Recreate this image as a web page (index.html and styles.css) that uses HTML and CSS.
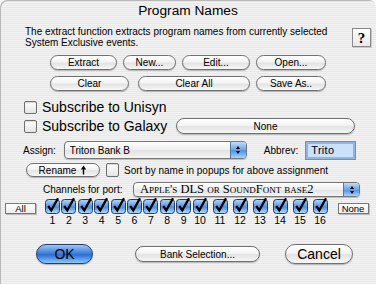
FILE: index.html
```html
<!DOCTYPE html>
<html><head><meta charset="utf-8"><link rel="stylesheet" href="styles.css"></head>
<body>
<svg class="defs" width="0" height="0"><defs>
<linearGradient id="blue" x1="0" y1="0" x2="0" y2="1"><stop offset="0" stop-color="#b8d6f7"/><stop offset="0.45" stop-color="#5f9de6"/><stop offset="0.55" stop-color="#4f8fe0"/><stop offset="1" stop-color="#bfe0fd"/></linearGradient>
</defs></svg>
<div class="window">
  <div class="titlebar">Program Names</div>
  <div class="desc">
    <p class="desc-text">The extract function extracts program names from currently selected<br>System Exclusive events.</p>
    <div class="help">?</div>
  </div>
  <div class="btnrow r1">
    <div class="btn w-extract">Extract</div>
    <div class="btn w-new">New...</div>
    <div class="btn w-edit">Edit...</div>
    <div class="btn w-open">Open...</div>
  </div>
  <div class="btnrow r2">
    <div class="btn w-clear">Clear</div>
    <div class="btn w-clearall">Clear All</div>
    <div class="btn w-save">Save As..</div>
  </div>
  <div class="bigcheck r-unisyn"><span class="box"></span><span class="biglabel">Subscribe to Unisyn</span></div>
  <div class="bigcheck r-galaxy"><span class="box"></span><span class="biglabel">Subscribe to Galaxy</span><div class="btn w-none">None</div></div>
  <div class="assign">
    <span class="lbl l-assign">Assign:</span>
    <div class="popup p-assign"><span class="ptext">Triton Bank B</span><span class="parrow"><i class="up"></i><i class="dn"></i></span></div>
    <span class="lbl l-abbrev">Abbrev:</span>
    <div class="field">Trito</div>
  </div>
  <div class="rename">
    <div class="btn w-rename">Rename <svg class="arr" width="7" height="10" viewBox="0 0 7 10"><path d="M3.5 0.5 L0.8 4.5 L2.8 4.5 L2.8 9.5 L4.2 9.5 L4.2 4.5 L6.2 4.5 Z" fill="#000"/></svg></div>
    <span class="box small"></span>
    <span class="lbl l-sort">Sort by name in popups for above assignment</span>
  </div>
  <div class="channels">
    <span class="lbl l-chan">Channels for port:</span>
    <div class="popup p-port"><span class="ptext serif">Apple's DLS or SoundFont base2</span><span class="parrow"><i class="up"></i><i class="dn"></i></span></div>
  </div>
  <div class="chrow">
    <div class="sqbtn b-all">All</div>
    <div class="chs">
      <div class="ch"><svg class="cb" width="15" height="16" viewBox="0 0 15 16"><rect x="0.5" y="1.5" width="14" height="14" rx="3" fill="url(#blue)" stroke="#223a66"/><path d="M3.2 8 L6.3 12.3 L13 0.3" fill="none" stroke="#000" stroke-width="2.3"/></svg><span>1</span></div>
      <div class="ch"><svg class="cb" width="15" height="16" viewBox="0 0 15 16"><rect x="0.5" y="1.5" width="14" height="14" rx="3" fill="url(#blue)" stroke="#223a66"/><path d="M3.2 8 L6.3 12.3 L13 0.3" fill="none" stroke="#000" stroke-width="2.3"/></svg><span>2</span></div>
      <div class="ch"><svg class="cb" width="15" height="16" viewBox="0 0 15 16"><rect x="0.5" y="1.5" width="14" height="14" rx="3" fill="url(#blue)" stroke="#223a66"/><path d="M3.2 8 L6.3 12.3 L13 0.3" fill="none" stroke="#000" stroke-width="2.3"/></svg><span>3</span></div>
      <div class="ch"><svg class="cb" width="15" height="16" viewBox="0 0 15 16"><rect x="0.5" y="1.5" width="14" height="14" rx="3" fill="url(#blue)" stroke="#223a66"/><path d="M3.2 8 L6.3 12.3 L13 0.3" fill="none" stroke="#000" stroke-width="2.3"/></svg><span>4</span></div>
      <div class="ch"><svg class="cb" width="15" height="16" viewBox="0 0 15 16"><rect x="0.5" y="1.5" width="14" height="14" rx="3" fill="url(#blue)" stroke="#223a66"/><path d="M3.2 8 L6.3 12.3 L13 0.3" fill="none" stroke="#000" stroke-width="2.3"/></svg><span>5</span></div>
      <div class="ch"><svg class="cb" width="15" height="16" viewBox="0 0 15 16"><rect x="0.5" y="1.5" width="14" height="14" rx="3" fill="url(#blue)" stroke="#223a66"/><path d="M3.2 8 L6.3 12.3 L13 0.3" fill="none" stroke="#000" stroke-width="2.3"/></svg><span>6</span></div>
      <div class="ch"><svg class="cb" width="15" height="16" viewBox="0 0 15 16"><rect x="0.5" y="1.5" width="14" height="14" rx="3" fill="url(#blue)" stroke="#223a66"/><path d="M3.2 8 L6.3 12.3 L13 0.3" fill="none" stroke="#000" stroke-width="2.3"/></svg><span>7</span></div>
      <div class="ch"><svg class="cb" width="15" height="16" viewBox="0 0 15 16"><rect x="0.5" y="1.5" width="14" height="14" rx="3" fill="url(#blue)" stroke="#223a66"/><path d="M3.2 8 L6.3 12.3 L13 0.3" fill="none" stroke="#000" stroke-width="2.3"/></svg><span>8</span></div>
      <div class="ch"><svg class="cb" width="15" height="16" viewBox="0 0 15 16"><rect x="0.5" y="1.5" width="14" height="14" rx="3" fill="url(#blue)" stroke="#223a66"/><path d="M3.2 8 L6.3 12.3 L13 0.3" fill="none" stroke="#000" stroke-width="2.3"/></svg><span>9</span></div>
      <div class="ch wide"><svg class="cb" width="15" height="16" viewBox="0 0 15 16"><rect x="0.5" y="1.5" width="14" height="14" rx="3" fill="url(#blue)" stroke="#223a66"/><path d="M3.2 8 L6.3 12.3 L13 0.3" fill="none" stroke="#000" stroke-width="2.3"/></svg><span>10</span></div>
      <div class="ch wide"><svg class="cb" width="15" height="16" viewBox="0 0 15 16"><rect x="0.5" y="1.5" width="14" height="14" rx="3" fill="url(#blue)" stroke="#223a66"/><path d="M3.2 8 L6.3 12.3 L13 0.3" fill="none" stroke="#000" stroke-width="2.3"/></svg><span>11</span></div>
      <div class="ch wide"><svg class="cb" width="15" height="16" viewBox="0 0 15 16"><rect x="0.5" y="1.5" width="14" height="14" rx="3" fill="url(#blue)" stroke="#223a66"/><path d="M3.2 8 L6.3 12.3 L13 0.3" fill="none" stroke="#000" stroke-width="2.3"/></svg><span>12</span></div>
      <div class="ch wide"><svg class="cb" width="15" height="16" viewBox="0 0 15 16"><rect x="0.5" y="1.5" width="14" height="14" rx="3" fill="url(#blue)" stroke="#223a66"/><path d="M3.2 8 L6.3 12.3 L13 0.3" fill="none" stroke="#000" stroke-width="2.3"/></svg><span>13</span></div>
      <div class="ch wide"><svg class="cb" width="15" height="16" viewBox="0 0 15 16"><rect x="0.5" y="1.5" width="14" height="14" rx="3" fill="url(#blue)" stroke="#223a66"/><path d="M3.2 8 L6.3 12.3 L13 0.3" fill="none" stroke="#000" stroke-width="2.3"/></svg><span>14</span></div>
      <div class="ch wide"><svg class="cb" width="15" height="16" viewBox="0 0 15 16"><rect x="0.5" y="1.5" width="14" height="14" rx="3" fill="url(#blue)" stroke="#223a66"/><path d="M3.2 8 L6.3 12.3 L13 0.3" fill="none" stroke="#000" stroke-width="2.3"/></svg><span>15</span></div>
      <div class="ch wide"><svg class="cb" width="15" height="16" viewBox="0 0 15 16"><rect x="0.5" y="1.5" width="14" height="14" rx="3" fill="url(#blue)" stroke="#223a66"/><path d="M3.2 8 L6.3 12.3 L13 0.3" fill="none" stroke="#000" stroke-width="2.3"/></svg><span>16</span></div>
    </div>
    <div class="sqbtn b-none">None</div>
  </div>
  <div class="bottom">
    <div class="btn big default w-ok">OK</div>
    <div class="btn w-bank">Bank Selection...</div>
    <div class="btn big w-cancel">Cancel</div>
  </div>
</div>
</body></html>
```
FILE: styles.css
```css
*{box-sizing:border-box;margin:0;padding:0}
body{margin:0;font-family:"Liberation Sans",Arial,sans-serif;color:#000;background:#fff}
.defs{position:absolute;width:0;height:0}
.window{width:376px;height:284px;overflow:hidden;border-radius:7px 7px 0 0;
  background:repeating-linear-gradient(to bottom,#f3f3f3 0,#f3f3f3 1px,#e8e8e8 1px,#e8e8e8 2px);
  box-shadow:inset 1px 1px 0 #b8b8b8}
.titlebar{height:22px;line-height:22px;text-align:center;font-size:13.7px;letter-spacing:0}
.desc{display:flex;padding-left:25px;margin-top:4px;height:22px}
.desc-text{font-size:10px;line-height:11px}
.help{margin-left:auto;margin-right:5px;margin-top:2px;width:19px;height:19px;border:1px solid #8a8a8a;
  background:linear-gradient(#fdfdfd,#e9e9e9);box-shadow:1px 1px 0 #c8c8c8;font-family:"Liberation Serif",serif;
  font-size:15px;font-weight:bold;text-align:center;line-height:18px}
.btn{display:flex;align-items:center;justify-content:center;height:15px;border:1px solid #707070;border-radius:8px;
  background:linear-gradient(#ffffff 0%,#f4f4f4 45%,#e3e3e3 55%,#f7f7f7 100%);box-shadow:0 1px 1px rgba(0,0,0,.25);
  font-size:10px;white-space:nowrap}
.btnrow{display:flex;padding-left:50px}
.r1{margin-top:7px;gap:6px}
.r2{margin-top:6px}
.w-extract{width:67px}.w-new{width:53px}.w-edit{width:68px}.w-open{width:70px}
.w-clear{width:79px}.w-clearall{width:112px;margin-left:9px}.w-save{width:70px;margin-left:6px}
.bigcheck{display:flex;align-items:center;padding-left:24px}
.r-unisyn{margin-top:9px;height:14px}
.r-galaxy{margin-top:4px;height:16px}
.box{width:13px;height:13px;border:1px solid #6f6f6f;border-radius:2px;background:linear-gradient(#ffffff,#e4e4e4);
  box-shadow:inset 0 1px 1px rgba(0,0,0,.15)}
.box.small{width:13px;height:14px}
.biglabel{font-size:14px;margin-left:5px}
.w-none{width:179px;height:16px;margin-left:auto;margin-right:21px}
.assign{display:flex;align-items:center;margin-top:7px;height:18px;padding-left:23px}
.lbl{font-size:10px}
.popup{display:flex;border:1px solid #777;border-radius:4px;background:linear-gradient(#fff,#eee 50%,#e2e2e2 51%,#f4f4f4);
  box-shadow:0 1px 1px rgba(0,0,0,.2);overflow:hidden}
.p-assign{width:183px;height:18px;margin-left:8px}
.ptext{flex:1;font-size:10px;padding-left:5px;display:flex;align-items:center}
.serif{font-family:"Liberation Serif",serif;font-variant:small-caps;font-size:12.5px;padding-left:6px}
.parrow{width:16px;border-left:1px solid #5077a8;background:linear-gradient(#c2dcf8,#6aa4e8 50%,#4f90e0 51%,#a8d2fb);
  display:flex;flex-direction:column;align-items:center;justify-content:center;gap:2px}
.parrow i{display:block;width:0;height:0;border-left:2.5px solid transparent;border-right:2.5px solid transparent}
.parrow .up{border-bottom:3px solid #000}
.parrow .dn{border-top:3px solid #000}
.l-abbrev{margin-left:17px}
.field{width:49px;height:17px;margin-left:8px;border:2px solid #8fb4e6;outline:1px solid #6d8fc4;background:#cbe0fa;
  font-size:11px;line-height:13px;padding-left:3px;letter-spacing:.3px}
.rename{display:flex;align-items:center;margin-top:4px;height:14px;padding-left:26px}
.w-rename{width:74px;height:14px}
.arr{margin-left:4px;display:block}
.rename .box{margin-left:6px}
.l-sort{margin-left:5px}
.channels{display:flex;align-items:center;margin-top:5px;height:15px;padding-left:43px}
.p-port{width:227px;height:15px;margin-left:auto;margin-right:16px}
.chrow{display:flex;align-items:flex-start;margin-top:1px;padding-left:5px}
.sqbtn{height:11px;border:1px solid #777;background:linear-gradient(#fff,#ececec);font-size:9.5px;line-height:9px;text-align:center;
  box-shadow:1px 1px 0 #bbb;margin-top:5px}
.b-all{width:31px}
.b-none{width:31px;margin-left:5px}
.chs{display:flex;margin-left:9px}
.ch{width:16.4px;display:flex;flex-direction:column;align-items:flex-start}
.ch.wide{width:20px}
.cb{overflow:visible;display:block}
.ch span{font-size:10.5px;line-height:10px;width:15px;text-align:center;margin-top:1px;display:flex;justify-content:center;white-space:nowrap}
.bottom{display:flex;align-items:center;margin-top:19px;padding-left:36px}
.big{height:20px;border-radius:10px;font-size:13px}
.w-ok{width:57px}
.default{border-color:#1f3e7a;background:linear-gradient(#9fc5f3 0%,#3f80da 45%,#2d6fd2 55%,#8cc8fb 100%);font-size:14px}
.w-bank{width:125px;height:16px;margin-left:42px}
.w-cancel{width:68px;margin-left:25px;font-size:14px}
```
